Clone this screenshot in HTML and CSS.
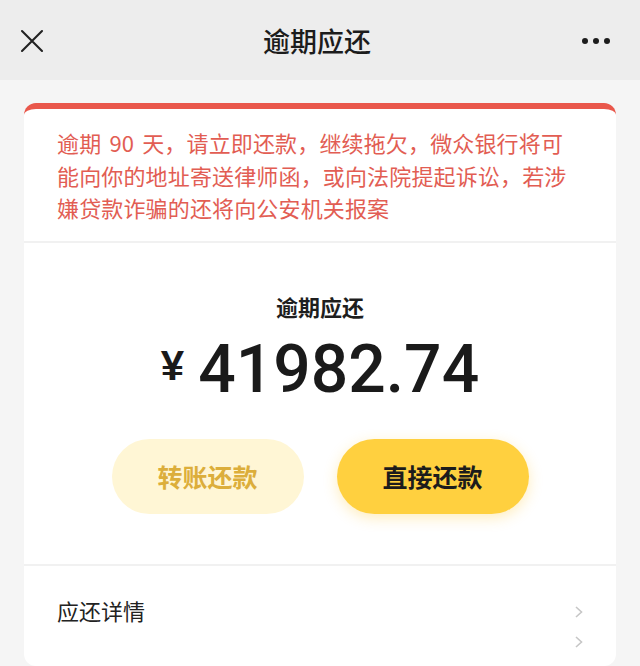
FILE: index.html
```html
<!DOCTYPE html>
<html lang="zh-CN">
<head>
  <meta charset="UTF-8">
  <title>逾期应还</title>
  <link rel="stylesheet" href="styles.css">
</head>
<body>
  <div class="topbar">
    <svg class="close" width="24" height="24" viewBox="0 0 24 24">
      <path d="M2 2 L22 22 M22 2 L2 22" stroke="#222" stroke-width="2.1" fill="none" stroke-linecap="round"/>
    </svg>
    <div class="title">逾期应还</div>
    <div class="more"><span></span><span></span><span></span></div>
  </div>

  <div class="card">
    <div class="notice">逾期 <span class="days">90</span> 天，请立即还款，继续拖欠，微众银行将可<br>能向你的地址寄送律师函，或向法院提起诉讼，若涉<br>嫌贷款诈骗的还将向公安机关报案</div>

    <div class="summary">
      <div class="label">逾期应还</div>
      <div class="amount">
        <span class="yen">¥</span>
        <span class="num">41982.74</span>
      </div>
      <div class="actions">
        <button class="btn btn-light">转账还款</button>
        <button class="btn btn-main">直接还款</button>
      </div>
    </div>

    <div class="row">
      <div class="row-text">应还详情</div>
      <div class="arrows">
        <svg width="10" height="12" viewBox="0 0 10 12"><path d="M2 1 L7.5 6 L2 11" stroke="#c6c6c6" stroke-width="1.6" fill="none"/></svg>
        <svg width="10" height="12" viewBox="0 0 10 12"><path d="M2 1 L7.5 6 L2 11" stroke="#c6c6c6" stroke-width="1.6" fill="none"/></svg>
      </div>
    </div>
  </div>
</body>
</html>
```

FILE: styles.css
```css
body {
  margin: 0;
  background: #f5f5f5;
  font-family: "Noto Sans CJK SC", "Noto Sans", sans-serif;
  color: #222;
}

.topbar {
  height: 80px;
  background: #ededed;
  display: grid;
  grid-template-columns: 1fr auto 1fr;
  align-items: center;
  padding: 0 30px 0 20px;
}

.close {
  display: block;
  margin-top: 2px;
}

.title {
  font-size: 27px;
  font-weight: 500;
  color: #1c1c1c;
  margin-left: 4px;
}

.more {
  display: flex;
  justify-content: flex-end;
  gap: 5px;
  margin-top: 2px;
}

.more span {
  width: 6px;
  height: 6px;
  border-radius: 50%;
  background: #1c1c1c;
}

.card {
  margin: 23px 24px 0;
  background: #fff;
  border-top: 6px solid #e9574b;
  border-radius: 12px;
  overflow: hidden;
}

.notice {
  padding: 17px 20px 17px 33px;
  font-size: 22px;
  line-height: 32.5px;
  letter-spacing: 0.15px;
  color: #e25d53;
  border-bottom: 2px solid #f1f1f1;
}

.days {
  padding: 0 3px;
}

.summary {
  padding: 48px 0 50px;
  display: flex;
  flex-direction: column;
  align-items: center;
  border-bottom: 2px solid #f1f1f1;
}

.label {
  font-size: 22px;
  font-weight: 700;
  line-height: 30px;
  color: #1e1e1e;
}

.amount {
  margin-top: 15px;
  display: flex;
  align-items: flex-start;
  color: #1a1a1a;
}

.yen {
  font-family: "Liberation Sans", Arial, sans-serif;
  font-weight: 700;
  font-size: 42px;
  line-height: 42px;
  margin-top: 9px;
  margin-right: 14px;
}

.num {
  font-family: Roboto, "Liberation Sans", sans-serif;
  font-weight: 500;
  font-size: 66px;
  line-height: 68px;
}

.actions {
  margin-top: 35px;
  display: flex;
  gap: 33px;
}

.btn {
  width: 192px;
  height: 75px;
  border: none;
  border-radius: 38px;
  font-family: "Noto Sans CJK SC", sans-serif;
  font-size: 25px;
  font-weight: 700;
  padding: 0;
}

.btn-light {
  background: #fff6d5;
  color: #dcae3b;
}

.btn-main {
  background: #ffd03f;
  color: #1c1c1c;
  box-shadow: 0 4px 14px rgba(255, 196, 40, 0.3);
}

.row {
  display: flex;
  justify-content: space-between;
  align-items: flex-start;
  padding: 32px 32px 18px 33px;
}

.row-text {
  font-size: 22px;
  line-height: 24px;
  color: #222;
}

.arrows {
  display: flex;
  flex-direction: column;
  gap: 18px;
  padding-top: 8px;
}

.arrows svg {
  display: block;
}
```
